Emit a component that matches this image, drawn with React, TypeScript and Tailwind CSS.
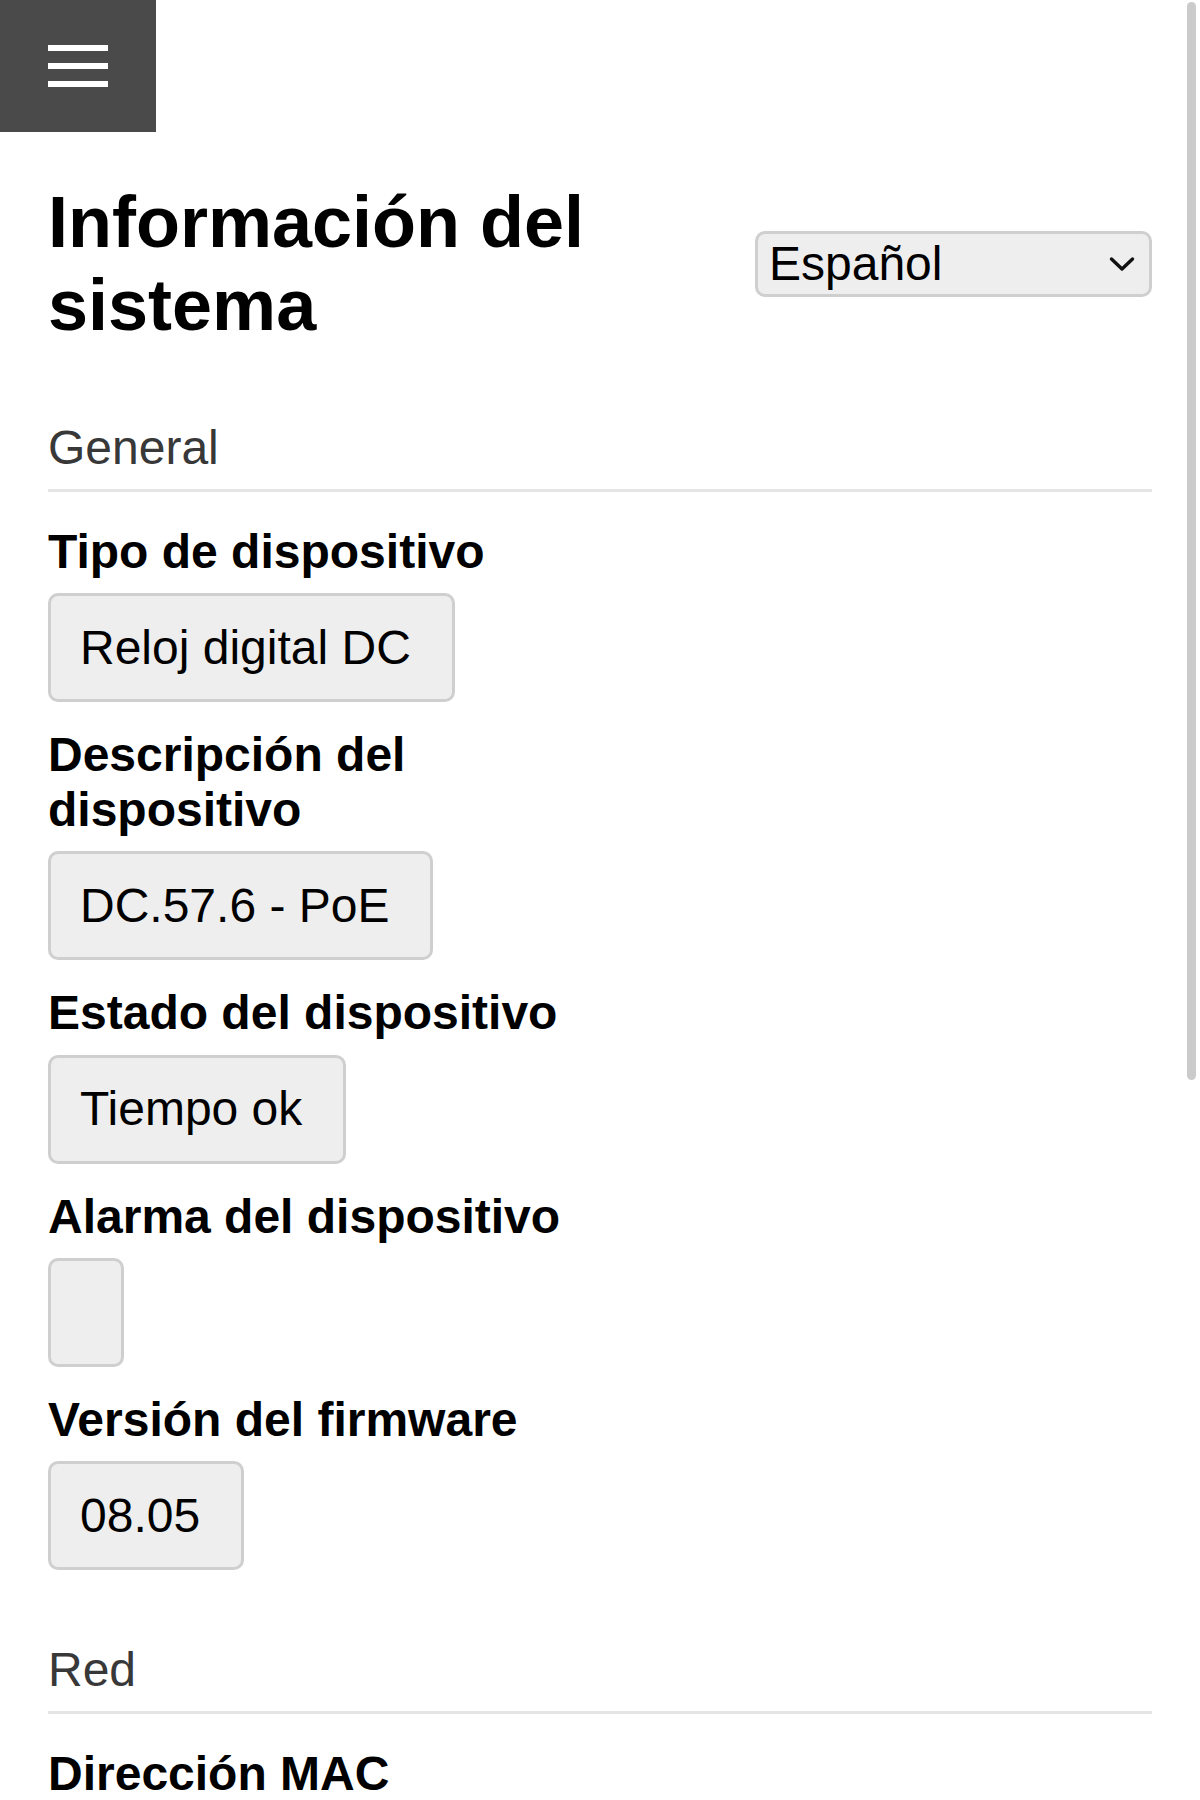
import React from "react";

const fields_general = [
  { label: "Tipo de dispositivo", value: "Reloj digital DC" },
  { label: "Descripción del dispositivo", value: "DC.57.6 - PoE" },
  { label: "Estado del dispositivo", value: "Tiempo ok" },
  { label: "Alarma del dispositivo", value: "" },
  { label: "Versión del firmware", value: "08.05" },
];

const fields_red = [{ label: "Dirección MAC", value: "00:50:C2:00:00:00" }];

const Field = ({
  label,
  value,
  first,
}: {
  label: string;
  value: string;
  first?: boolean;
}) => {
  return (
    <div className={first ? "mt-[32px]" : "mt-[25px]"}>
      <div className="mb-[14px] max-w-[560px] text-[48px] font-bold leading-[1.15]">
        {label}
      </div>
      <div className="flex h-[109px] w-fit items-center rounded-[10px] border-[3px] border-[#cfcfcf] bg-[#eeeeee] pl-[29px] pr-[41px] text-[48px] leading-[1.15]">
        {value}
      </div>
    </div>
  );
};

const Section = ({
  title,
  fields,
  className,
}: {
  title: string;
  fields: { label: string; value: string }[];
  className: string;
}) => {
  return (
    <div className={className}>
      <h2 className="border-b-[3px] border-[#e5e5e5] pb-[14px] text-[48px] font-normal leading-[1.15] text-[#383838]">
        {title}
      </h2>
      {fields.map((field, field_index) => (
        <Field
          key={field.label}
          label={field.label}
          value={field.value}
          first={field_index === 0}
        />
      ))}
    </div>
  );
};

export default function App() {
  return (
    <div className="relative h-[1800px] overflow-hidden bg-white font-['Liberation_Sans',Arial,sans-serif] text-black">
      {/* menu button */}
      <div className="flex h-[132px] w-[156px] flex-col items-center justify-center gap-[12px] bg-[#4a4a4a]">
        <div className="h-[6px] w-[60px] bg-white" />
        <div className="h-[6px] w-[60px] bg-white" />
        <div className="h-[6px] w-[60px] bg-white" />
      </div>

      <div className="px-[48px]">
        <div className="mt-[49px] flex items-start justify-between">
          <h1 className="w-[620px] text-[72px] font-bold leading-[1.15]">
            Información del sistema
          </h1>
          <div className="mt-[50px] flex h-[66px] w-[397px] items-center justify-between rounded-[10px] border-[3px] border-[#cfcfcf] bg-[#eeeeee] pl-[11px] pr-[14px] text-[48px] leading-none">
            <span>Español</span>
            <svg width="26" height="16" viewBox="0 0 26 16" fill="none">
              <path
                d="M2.5 3 L13 13 L23.5 3"
                stroke="#111"
                strokeWidth="3.4"
                strokeLinecap="round"
                strokeLinejoin="round"
              />
            </svg>
          </div>
        </div>

        <Section title="General" fields={fields_general} className="mt-[73px]" />
        <Section title="Red" fields={fields_red} className="mt-[72px]" />
      </div>

      {/* overlay scrollbar */}
      <div className="absolute right-[4px] top-[2px] h-[1078px] w-[9px] rounded-full bg-[#cbcbcb]" />
    </div>
  );
}
